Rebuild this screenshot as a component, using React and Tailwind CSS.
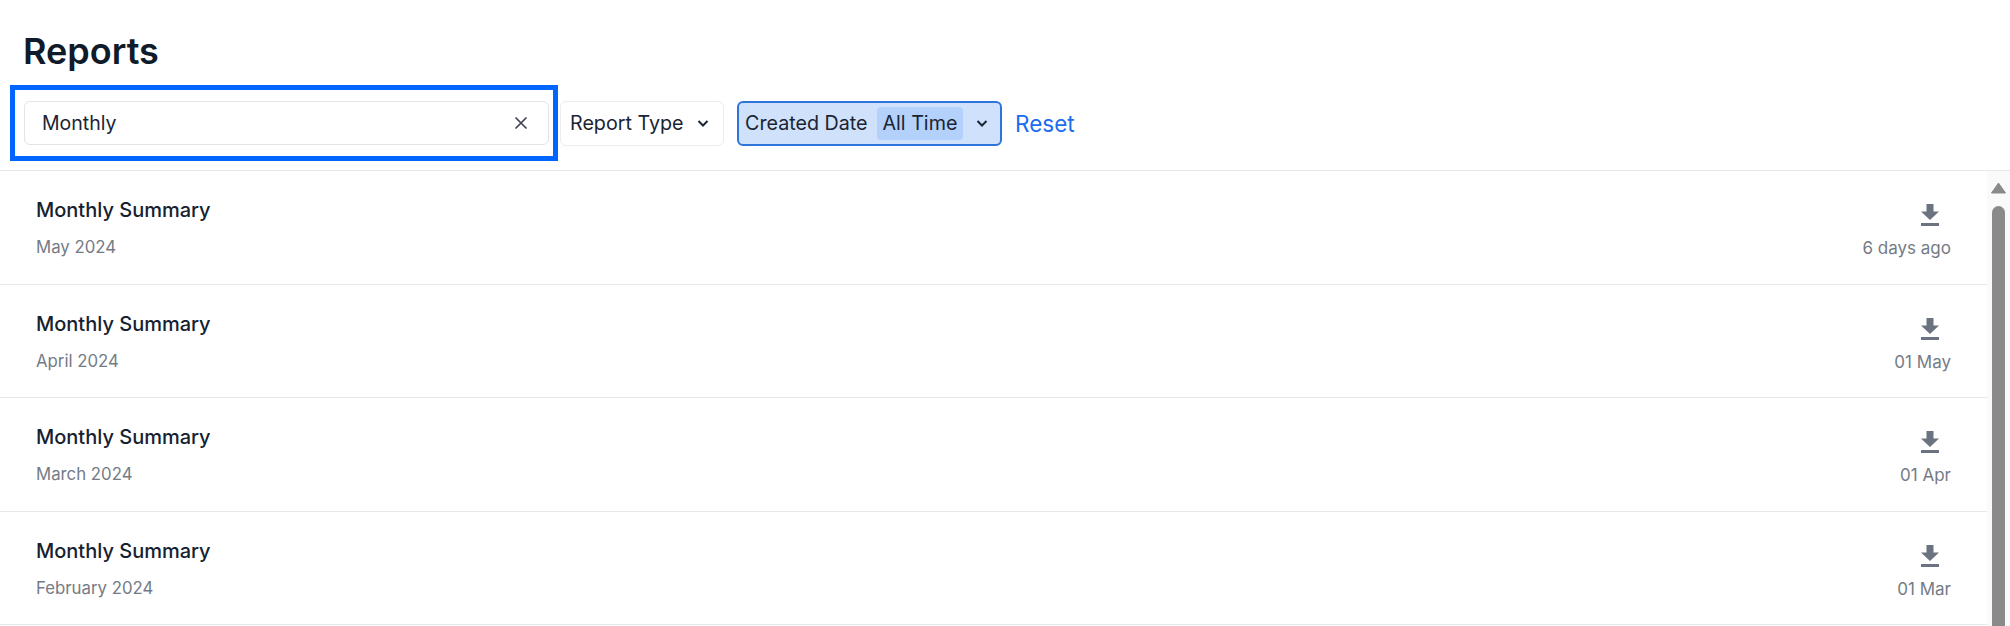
const rows = [
  { sub: "May 2024", date: "6 days ago" },
  { sub: "April 2024", date: "01 May" },
  { sub: "March 2024", date: "01 Apr" },
  { sub: "February 2024", date: "01 Mar" },
];

function Chevron() {
  return (
    <svg width="16" height="16" viewBox="0 0 16 16" fill="none" stroke="#1a2433" strokeWidth="2" className="shrink-0">
      <path d="M3.5 6 8 10.5 12.5 6" />
    </svg>
  );
}

function Download() {
  return (
    <svg width="18" height="22" viewBox="0 0 18 22" fill="#6b7280">
      <path d="M5.5 0h7v7.5H18L9 16 0 7.5h5.5z" />
      <rect x="0" y="19" width="18" height="3" />
    </svg>
  );
}

export default function App() {
  return (
    <div className="h-[626px] w-[2010px] overflow-hidden bg-white font-['Inter',sans-serif] text-[#111827]">
      <div className="h-[171px] border-b border-[#e8e8ea]">
        <h1 className="pl-[23px] pt-[26px] text-[36px] font-semibold leading-[50px] text-[#0f1a2a]">Reports</h1>
        <div className="ml-[10px] mt-[9px] flex items-center">
          <div className="h-[76px] w-[548px] shrink-0 border-[5px] border-[#0066ff] py-[11px] pl-[9px] pr-[4px]">
            <div className="flex h-[44px] items-center justify-between rounded-[6px] border border-[#e4e4e7] pl-[17px] pr-[20px]">
              <span className="pt-[2px] text-[19.5px] text-[#1a2433]">Monthly</span>
              <svg width="14" height="14" viewBox="0 0 14 14" fill="none" stroke="#3f4652" strokeWidth="1.7">
                <path d="M1.5 1.5l11 11M12.5 1.5l-11 11" />
              </svg>
            </div>
          </div>
          <div className="ml-[2px] flex h-[45px] w-[164px] shrink-0 items-center rounded-[6px] border border-[#ececee] pl-[9px]">
            <span className="pt-[2px] text-[19.7px] text-[#1a2433]">Report Type</span>
            <span className="ml-[11px]"><Chevron /></span>
          </div>
          <div className="ml-[13px] flex h-[45px] w-[265px] shrink-0 items-center rounded-[6px] border-2 border-[#2f74d8] bg-[#cfe1fb] pl-[6px]">
            <span className="pt-[2px] text-[19.7px] text-[#1a2433]">Created Date</span>
            <span className="ml-[9px] flex h-[33px] items-center rounded-[4px] bg-[#b3d1fa] px-[6px] pt-[2px] text-[19.7px] text-[#1a2433]">All Time</span>
            <span className="ml-[11px]"><Chevron /></span>
          </div>
          <span className="ml-[13px] pt-[2px] text-[22.5px] text-[#1c6cf2]">Reset</span>
        </div>
      </div>
      <div className="flex">
        <div className="w-[1987px]">
          {rows.map((r) => (
            <div key={r.sub} className="flex h-[113.5px] items-start justify-between border-b border-[#e8e8ea] pl-[36px] pr-[36px]">
              <div>
                <div className="pt-[26px] text-[20px] font-medium leading-[27px] text-[#162130]">Monthly Summary</div>
                <div className="pt-[11px] text-[16.8px] leading-[24px] text-[#747b86]">{r.sub}</div>
              </div>
              <div className="flex flex-col items-end">
                <div className="mr-[12px] pt-[33px] leading-none"><Download /></div>
                <div className="pt-[10px] text-[17px] leading-[24px] text-[#747b86]">{r.date}</div>
              </div>
            </div>
          ))}
        </div>
        <div className="h-[455px] w-[23px] bg-[#fafafa] pl-[5px]">
          <svg width="15" height="12" viewBox="0 0 15 12" fill="#8a8a8a" className="ml-[-1px] mt-[11px] block">
            <path d="M7.5 1 14.5 11H.5z" stroke="#8a8a8a" strokeLinejoin="round" />
          </svg>
          <div className="mt-[12px] h-[420px] w-[13px] rounded-t-full bg-[#8a8a8a]" />
        </div>
      </div>
    </div>
  );
}
